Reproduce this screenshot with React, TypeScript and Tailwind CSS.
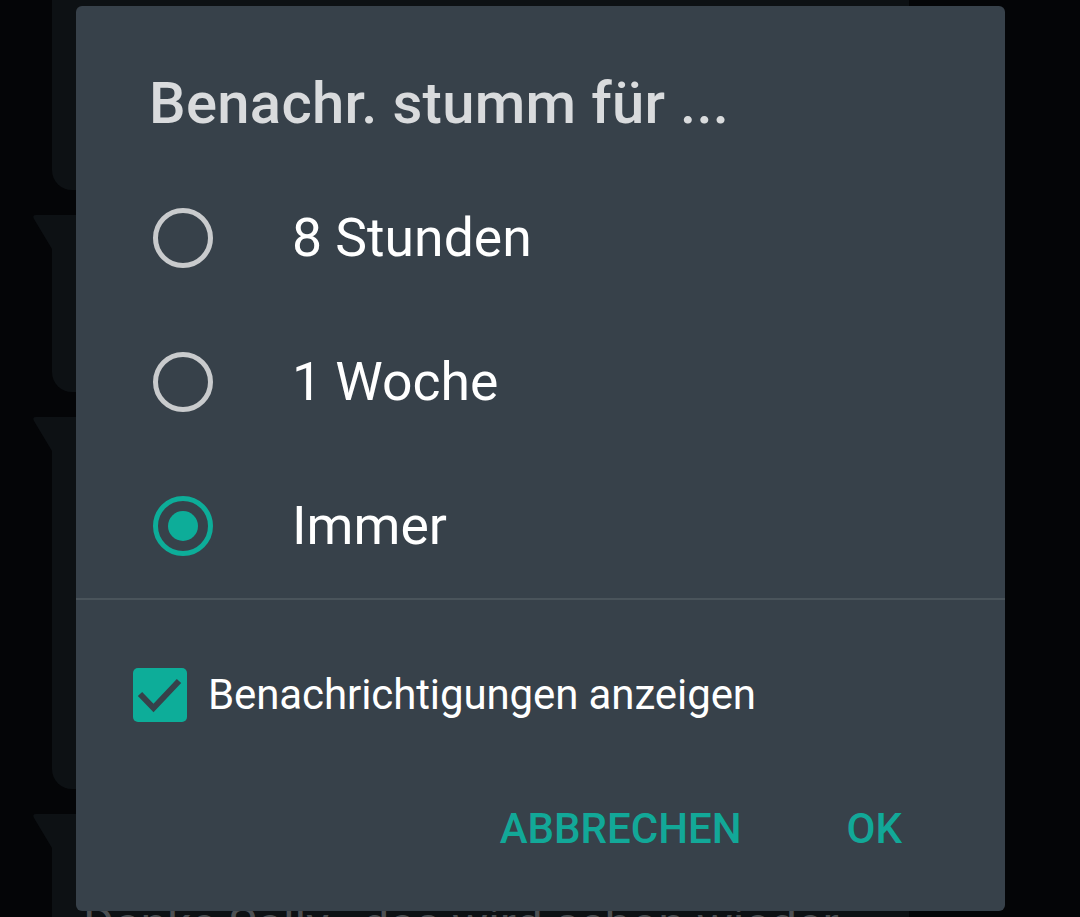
const options = [
  { label: "8 Stunden", checked: false },
  { label: "1 Woche", checked: false },
  { label: "Immer", checked: true },
];

function Tail() {
  return (
    <svg
      className="absolute left-[-20px] top-0"
      width="20"
      height="34"
      viewBox="0 0 20 34"
    >
      <path d="M20 0 L4 0 Q0 0 2 4 L20 34 Z" fill="#0d1114" />
    </svg>
  );
}

function Bubble({
  height,
  tail,
  children,
}: {
  height: string;
  tail?: boolean;
  children?: React.ReactNode;
}) {
  return (
    <div
      className={`relative w-[857px] shrink-0 bg-[#0d1114] rounded-bl-[20px] rounded-br-[20px] ${height}`}
    >
      {tail && <Tail />}
      {children}
    </div>
  );
}

function Radio({ checked }: { checked: boolean }) {
  return checked ? (
    <div className="w-[60px] h-[60px] rounded-full border-[5px] border-[#0dad99] flex items-center justify-center">
      <div className="w-[30px] h-[30px] rounded-full bg-[#0dad99]" />
    </div>
  ) : (
    <div className="w-[60px] h-[60px] rounded-full border-[5px] border-[#c9cbcd]" />
  );
}

export default function App() {
  return (
    <div
      className="relative w-[1080px] h-[917px] overflow-hidden bg-[#040507]"
      style={{ fontFamily: "Roboto, 'Noto Sans', sans-serif" }}
    >
      {/* chat behind the dialog */}
      <div className="flex flex-col pl-[52px] gap-[25px] mt-[-10px]">
        <Bubble height="h-[200px]" />
        <Bubble height="h-[177px]" tail />
        <Bubble height="h-[372px]" tail />
        <Bubble height="h-[200px]" tail>
          <div className="pt-[87px] pl-[31px] text-[48px] leading-none text-[#4d5053] whitespace-nowrap">
            Danke Sally , das wird schon wieder
          </div>
        </Bubble>
      </div>

      {/* dialog */}
      <div className="absolute left-[76px] top-[6px] w-[929px] h-[905px] rounded-[6px] bg-[#37414a] flex flex-col">
        <div className="h-[160px] pt-[68px] pl-[73px]">
          <h1 className="text-[58px] leading-none font-medium text-[#d9dbdd] tracking-[0.3px]">
            Benachr. stumm für ...
          </h1>
        </div>

        {options.map((o) => (
          <div key={o.label} className="h-[144px] flex items-center pl-[77px]">
            <Radio checked={o.checked} />
            <span className="ml-[79px] text-[53.5px] leading-none text-white">
              {o.label}
            </span>
          </div>
        ))}

        <div className="h-[2px] bg-[#4a545b]" />

        <div className="mt-[68px] h-[54px] flex items-center pl-[57px]">
          <div className="w-[54px] h-[54px] rounded-[5px] bg-[#0dad99]">
            <svg width="54" height="54" viewBox="0 0 54 54">
              <path
                d="M7 26 L20.5 40 L46 13"
                fill="none"
                stroke="#37414a"
                strokeWidth="6"
              />
            </svg>
          </div>
          <span className="ml-[21px] text-[42px] leading-none text-white tracking-[-0.1px]">
            Benachrichtigungen anzeigen
          </span>
        </div>

        <div className="mt-[80px] h-[54px] flex items-center justify-end gap-[105px] pr-[103px]">
          <span className="text-[42px] leading-none font-medium text-[#12a898]">
            ABBRECHEN
          </span>
          <span className="text-[42px] leading-none font-medium text-[#12a898]">
            OK
          </span>
        </div>
      </div>
    </div>
  );
}
